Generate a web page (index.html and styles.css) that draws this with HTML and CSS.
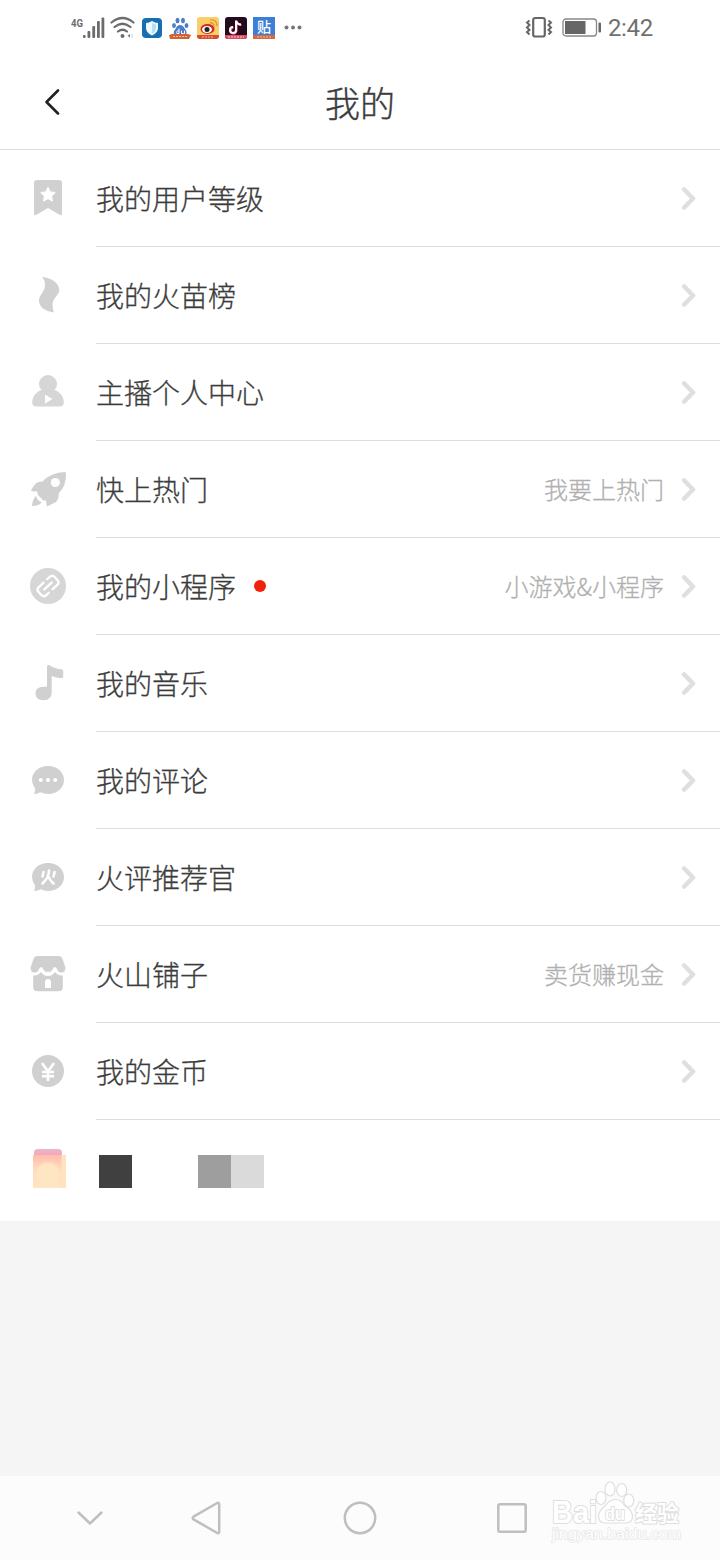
FILE: index.html
```html
<!DOCTYPE html>
<html lang="zh-CN">
<head>
<meta charset="utf-8">
<title>我的</title>
<link rel="stylesheet" href="styles.css">
</head>
<body>
<div class="screen">
  <div class="status">
    <div class="status-left">
      <svg class="signal" width="34" height="24" viewBox="0 0 34 24"><text class="net" x="0" y="10.500" textLength="12" lengthAdjust="spacingAndGlyphs">4G</text><g fill="#6c6c6c"><rect x="12" y="19" width="2.600" height="3" rx="1"/><rect x="16.500" y="15" width="2.800" height="7" rx="1"/><rect x="21.300" y="10" width="2.800" height="12" rx="1"/><rect x="26" y="5" width="2.800" height="17" rx="1"/><rect x="30.500" y="1.500" width="2.800" height="20.500" rx="1"/></g></svg>
      <svg class="wifi" width="25" height="24" viewBox="0 0 25 24" fill="none" stroke="#6c6c6c" stroke-width="2.200" stroke-linecap="round"><path d="M1.500 6.500Q12.500-2.500 23.500 6.500M4.500 11Q12.500 4.500 20.500 11M8 15.500Q12.500 12 17 15.500"/><circle cx="12.500" cy="20" r="2" fill="#6c6c6c" stroke="none"/><path d="M20 18v3.500l-2.500-1.700z" fill="#777" stroke="none"/><path d="M22 18.500v3" stroke="#ccc" stroke-width="1"/></svg>
      <svg class="app" width="22" height="22" viewBox="0 0 22 22"><rect x="1" y="1" width="20" height="20" rx="4" fill="#176fb0"/><path d="M11 4q3 2 6 2v5q0 5-6 7.500Q5 16 5 11V6q3 0 6-2z" fill="#eefcff"/><path d="M11 6v11q4-2 4-6V7.500z" fill="#b8e0f2"/></svg>
      <svg class="app" width="22" height="22" viewBox="0 0 22 22"><g fill="#4f7cc8"><ellipse cx="8.500" cy="3.500" rx="2" ry="2.700"/><ellipse cx="14" cy="3.500" rx="2" ry="2.700"/><ellipse cx="5" cy="8.500" rx="1.900" ry="2.500"/><ellipse cx="17.500" cy="8.500" rx="1.900" ry="2.500"/><path d="M11 8q3 0 5 4 2.500 3 1 6H5.500q-2-3 1-6 1.500-4 4.500-4z"/></g><path d="M10 11.500v5h-2q-1.500-2.500 2-2.800m2.500 0v3h3v-3" fill="none" stroke="#fff"/><path d="M0 18l3-1h16l3 1-2 4H1z" fill="#d2622f"/><path d="M4 19.500h14" stroke="#f6c29e" stroke-dasharray="2 1"/></svg>
      <svg class="app" width="22" height="22" viewBox="0 0 22 22"><rect width="22" height="22" rx="3" fill="#f8cf69"/><ellipse cx="10.500" cy="12" rx="7" ry="5" fill="#d52a20"/><ellipse cx="10" cy="12.500" rx="5" ry="3.500" fill="#fff"/><circle cx="10" cy="12.500" r="2.500" fill="#222"/><path d="M13 6q4-1 4 4M13 3q7-1 7 6" fill="none" stroke="#e79a32" stroke-width="1.500"/><path d="M0 18h22v1q0 3-3 3H3q-3 0-3-3z" fill="#d94b32"/><path d="M5 20h12" stroke="#f5b39a" stroke-dasharray="2 1"/></svg>
      <svg class="app" width="22" height="22" viewBox="0 0 22 22"><rect width="22" height="22" rx="3" fill="#210b1c"/><path d="M11.500 4v9.500a3 3 0 1 1-3-3M11.500 4q1 4 5 4" fill="none" stroke="#e44a6a" stroke-width="2.400"/><path d="M11 3.500V13a3 3 0 1 1-3-3M11 3.500q1 4 5 4" fill="none" stroke="#fff" stroke-width="2"/><path d="M0 18h22v1q0 3-3 3H3q-3 0-3-3z" fill="#dc4b62"/><path d="M3 20h16" stroke="#fbd0d5" stroke-dasharray="2 1"/></svg>
      <svg class="app tile" width="22" height="22" viewBox="0 0 22 22"><rect width="22" height="22" fill="#3b7fd6"/><path d="M0 18h22v4H0z" fill="#d8683f"/><path d="M4 20h14" stroke="#f1c2a8" stroke-dasharray="2 1"/><text class="tie" x="4" y="15">贴</text></svg>
      <svg class="more" width="18" height="6" viewBox="0 0 18 6" fill="#777"><circle cx="2.500" cy="2.500" r="2"/><circle cx="9" cy="2.500" r="2"/><circle cx="15.500" cy="2.500" r="2"/></svg>
    </div>
    <div class="status-right">
      <svg width="28" height="24" viewBox="0 0 28 24" fill="none" stroke="#666"><rect x="8.200" y="2" width="11.600" height="18.500" rx="2" stroke-width="2.200"/><path d="M4.500 4.500l-2.500 2 2.500 2.500L2 11.500 4.500 14 2 16l2.500 2.500M23.500 4.500l2.500 2-2.500 2.500 2.500 2.500-2.500 2.500 2.500 2-2.500 2.500" stroke-width="2"/></svg>
      <svg width="40" height="20" viewBox="0 0 40 20"><rect x="1" y="1" width="33.500" height="17" rx="3" fill="none" stroke="#888" stroke-width="1.300"/><rect x="3" y="3" width="20.500" height="13" fill="#666"/><rect x="36.500" y="4.500" width="2.500" height="10" rx="1" fill="#666"/></svg>
      <span class="time">2:42</span>
    </div>
  </div>

  <header class="header">
    <svg class="back" width="20" height="32" viewBox="0 0 20 32"><path d="M16 4.500L4.500 16 16 27.500" fill="none" stroke="#222" stroke-width="2.600" stroke-linecap="round" stroke-linejoin="round"/></svg>
    <h1 class="title">我的</h1>
  </header>

  <main class="list">
    <div class="row">
      <svg class="icon" viewBox="0 0 40 40"><path d="M9 2h22q3 0 3 3v30.500q0 2.500-2.300 1.200L20 30 8.300 36.700Q6 38 6 35.500V5q0-3 3-3z"/><path class="w" d="M20 9.200l2.200 4.700 5.100.6-3.700 3.600.9 5.100-4.500-2.500-4.500 2.500.9-5.100-3.700-3.600 5.100-.6z" stroke="#fff" stroke-linejoin="round"/></svg>
      <div class="cell"><span class="label">我的用户等级</span><svg class="arrow" viewBox="0 0 16 26"><path d="M4.200 4.500L13 13.500 4.200 22.500"/></svg></div>
    </div>
    <div class="row">
      <svg class="icon" viewBox="0 0 40 40"><path d="M14 2C24 3 31 8 31.300 15C31.300 20 24.500 23 24.500 30Q24.500 34 26 37.500C17 36 11 32 11 25.500C11 20 17 17 17 10Q17 5 14 2z"/></svg>
      <div class="cell"><span class="label">我的火苗榜</span><svg class="arrow" viewBox="0 0 16 26"><path d="M4.200 4.500L13 13.500 4.200 22.500"/></svg></div>
    </div>
    <div class="row">
      <svg class="icon soft" viewBox="0 0 40 40"><circle cx="20" cy="12" r="9"/><path d="M14 18h12c5 1 9.500 6 9.800 12q0 4.500-4.300 4.500h-23q-4.300 0-4.300-4.500C4.500 24 9 19 14 18z"/><path class="w" d="M17 22.500l7.500 4.500-7.500 4.500z"/></svg>
      <div class="cell"><span class="label">主播个人中心</span><svg class="arrow" viewBox="0 0 16 26"><path d="M4.200 4.500L13 13.500 4.200 22.500"/></svg></div>
    </div>
    <div class="row">
      <svg class="icon" viewBox="0 0 40 40"><path d="M36.500 3Q38 3 38 4.500Q38.500 16.500 30.700 24.500Q31 30 28 33L20 37Q18.500 37.500 18.500 36L18 31.500Q14 32 13.500 29.500L11 27Q9 26 9.500 22.500L4 22.300Q2.500 22 3.500 20.500Q8 11.500 14.500 12.500Q23 3.500 36.500 3z"/><circle class="w" cx="27.300" cy="13.500" r="4.600"/><path d="M8 26.500q1 5.500 6 7-4 3.500-10 3.500 0-5 4-10.500z"/></svg>
      <div class="cell"><span class="label">快上热门</span><span class="note">我要上热门</span><svg class="arrow" viewBox="0 0 16 26"><path d="M4.200 4.500L13 13.500 4.200 22.500"/></svg></div>
    </div>
    <div class="row">
      <svg class="icon soft" viewBox="0 0 40 40"><circle cx="20" cy="20" r="18"/><g transform="rotate(-43 20 20)" fill="none" stroke="#fff" stroke-width="2.300" stroke-linecap="round"><path d="M15 20h10M19 14.500h-6.500q-3.500 0-3.500 3.500v4q0 3.500 3.500 3.500H16M21 25.500h6.500q3.500 0 3.500-3.500v-4q0-3.500-3.500-3.500H24"/></g></svg>
      <div class="cell"><span class="label">我的小程序</span><i class="dot"></i><span class="note">小游戏&amp;小程序</span><svg class="arrow" viewBox="0 0 16 26"><path d="M4.200 4.500L13 13.500 4.200 22.500"/></svg></div>
    </div>
    <div class="row">
      <svg class="icon" viewBox="0 0 40 40"><path d="M19 4q0-2.500 2.500-1.700Q27 6 33.500 6.300q1.700.2 1.700 2v5.200q0 2-2 1.800-5-.3-9.500-2.300V29q0 8.300-8.500 8.300-7.700-.3-7.700-6.500 0-7 8-7H19z"/></svg>
      <div class="cell"><span class="label">我的音乐</span><svg class="arrow" viewBox="0 0 16 26"><path d="M4.200 4.500L13 13.500 4.200 22.500"/></svg></div>
    </div>
    <div class="row">
      <svg class="icon" viewBox="0 0 40 40"><path d="M20 6c9 0 16 6 16 14s-7 14-16 14q-4 0-7.500-1.700Q9 34.300 6 34q1.700-2.500 1-5.500Q4 24.500 4 20C4 12 11 6 20 6z"/><g class="w"><circle cx="12.800" cy="20" r="2"/><circle cx="20" cy="20" r="2"/><circle cx="27.200" cy="20" r="2"/></g></svg>
      <div class="cell"><span class="label">我的评论</span><svg class="arrow" viewBox="0 0 16 26"><path d="M4.200 4.500L13 13.500 4.200 22.500"/></svg></div>
    </div>
    <div class="row">
      <svg class="icon" viewBox="0 0 40 40"><path d="M20 6c9 0 16 6 16 14s-7 14-16 14q-4 0-7.500-1.700Q9 34.300 6 34q1.700-2.500 1-5.500Q4 24.500 4 20C4 12 11 6 20 6z"/><path d="M21 13.500q0 7-6.500 13M20.500 20q2 4 5 6.500M15.500 15l-1 4.500M26.500 15l-1 4.500" fill="none" stroke="#fff" stroke-width="2.600" stroke-linecap="round"/></svg>
      <div class="cell"><span class="label">火评推荐官</span><svg class="arrow" viewBox="0 0 16 26"><path d="M4.200 4.500L13 13.500 4.200 22.500"/></svg></div>
    </div>
    <div class="row">
      <svg class="icon" viewBox="0 0 40 40"><path d="M9 2h22q2.500 0 3.300 2.500l3 8.500q.7 5.500-4 5.500-3.300 0-4-3-1-2.500-2.500-2.500T24.500 15.500q-1 2.500-4.500 2.500t-4.500-2.500Q14.500 13 13.200 13t-2.500 2.500q-.7 3-4 3-4.700 0-4-5.500l3-8.500Q6.500 2 9 2z"/><path d="M5.200 21.500q4.800.5 7.800-3.500 2.500 4 7 4t7-4q3 4 7.800 3.500V33q0 4.200-4.200 4.200H9.400q-4.200 0-4.200-4.200z"/><path class="w" d="M17 34v-6q0-3 3-3t3 3v6z"/></svg>
      <div class="cell"><span class="label">火山铺子</span><span class="note">卖货赚现金</span><svg class="arrow" viewBox="0 0 16 26"><path d="M4.200 4.500L13 13.500 4.200 22.500"/></svg></div>
    </div>
    <div class="row">
      <svg class="icon" viewBox="0 0 40 40"><circle cx="20" cy="20" r="16"/><path d="M14 12l6 8.500 6-8.500M20 20v10M14 21h12M14 25.300h12" fill="none" stroke="#fff" stroke-width="2.600"/></svg>
      <div class="cell"><span class="label">我的金币</span><svg class="arrow" viewBox="0 0 16 26"><path d="M4.200 4.500L13 13.500 4.200 22.500"/></svg></div>
    </div>
    <div class="masked">
      <div class="packet"><div class="packet-top"></div><div class="packet-body"></div></div>
      <div class="block dark"></div>
      <div class="block mid"></div>
      <div class="block light"></div>
    </div>
  </main>

  <div class="filler"></div>

  <nav class="nav">
    <svg class="n-down" viewBox="0 0 40 40"><path d="M8.500 14.500L20 25.500l11.500-11"/></svg>
    <svg class="n-back" viewBox="0 0 40 40"><path d="M7.500 18.700L31.200 5q2-.8 2 1.300v27.400q0 2.100-2 1.300L7.500 21.300q-1.500-1.300 0-2.600z"/></svg>
    <svg class="n-home" viewBox="0 0 40 40"><circle cx="20" cy="20" r="15.200"/></svg>
    <svg class="n-recent" viewBox="0 0 40 40"><rect x="6.300" y="6.300" width="27.400" height="27.400" rx="1.500"/></svg>
    <svg class="mark" width="134" height="66" viewBox="0 0 134 66">
      <g class="mark-line">
        <text class="m-bai" x="1" y="41.500" textLength="45" lengthAdjust="spacingAndGlyphs">Bai</text>
        <ellipse cx="50" cy="17" rx="5" ry="6.500"/><ellipse cx="59" cy="8" rx="5" ry="7"/><ellipse cx="70.700" cy="9" rx="5" ry="6.500"/><ellipse cx="77.700" cy="19.500" rx="5" ry="6.500"/>
        <path d="M64.500 18.500q6 0 9 6 8 5 8 10.500 0 7-7 7H54.500q-7 0-7-7 0-5 8-11.500 3-5 9-5z"/>
        <text class="m-du" x="54" y="38.500" textLength="20" lengthAdjust="spacingAndGlyphs">du</text>
        <text class="m-cn" x="84" y="39.500">经验</text>
        <text class="m-url" x="1" y="58" textLength="129" lengthAdjust="spacingAndGlyphs">jingyan.baidu.com</text>
      </g>
    </svg>
  </nav>
</div>
</body>
</html>
```
FILE: styles.css
```css
* { box-sizing: border-box; }
body {
  margin: 0;
  background: #fff;
  font-family: "Noto Sans CJK SC", "Noto Sans", sans-serif;
  color: #3c3c3c;
}
svg { display: block; flex: none; }
.screen { width: 720px; height: 1560px; display: flex; flex-direction: column; }

.status {
  height: 55px;
  padding: 0 67px 0 71px;
  display: flex;
  justify-content: space-between;
  align-items: center;
}
.status-left, .status-right { display: flex; align-items: center; }
.wifi { margin-left: 5px; }
.app { margin-left: 6px; }
.tile { overflow: visible; }
.more { margin-left: 9px; }
.net { font: 700 11.5px Roboto, sans-serif; fill: #6c6c6c; }
.tie { font: 500 14px "Noto Sans CJK SC", sans-serif; fill: #fff; }
.status-right svg:nth-child(2) { margin-left: 9px; }
.time { margin-left: 6px; font: 400 24px/28px Roboto, sans-serif; letter-spacing: -0.3px; color: #707070; }

.header {
  height: 95px;
  padding: 0 42px;
  display: grid;
  grid-template-columns: 20px 1fr 20px;
  align-items: center;
  border-bottom: 1px solid #dedede;
}
.title {
  margin: 0;
  text-align: center;
  font-size: 35px;
  font-weight: 300;
  line-height: 50px;
  -webkit-text-stroke: 0.4px #3c3c3c;
}

.row { display: flex; height: 97px; padding-left: 28px; }
.icon { width: 40px; height: 40px; margin: 28px 28px 0 0; fill: #d0d0d0; }
.soft { fill: #d6d6d6; }
.icon .w { fill: #fff; }
.cell {
  flex: 1;
  display: flex;
  align-items: center;
  padding-right: 24px;
  border-bottom: 1px solid #dedede;
}
.label { font-size: 28px; font-weight: 300; line-height: 40px; -webkit-text-stroke: 0.3px #3c3c3c; }
.dot { width: 12px; height: 12px; margin-left: 18px; border-radius: 50%; background: #f02209; }
.note {
  margin-left: auto;
  font-size: 24px;
  font-weight: 300;
  line-height: 36px;
  color: #b0b0b0;
  -webkit-text-stroke: 0.3px #b0b0b0;
}
.arrow {
  width: 16px;
  height: 26px;
  margin-left: auto;
  fill: none;
  stroke: #dfdfdf;
  stroke-width: 4.600;
  stroke-linecap: round;
  stroke-linejoin: round;
}
.note + .arrow { margin-left: 16px; }

.masked { height: 101px; padding: 29px 0 0 33px; display: flex; align-items: flex-start; }
.packet { width: 33px; }
.packet-top { width: 28px; height: 6px; margin-left: 1px; border-radius: 4px 4px 0 0; background: linear-gradient(#edb3cf, #f5a8ba); }
.packet-body {
  height: 33px;
  background:
    radial-gradient(circle at 15px 19px, #ffe6c2 0 10px, transparent 13px),
    linear-gradient(90deg, transparent 28px, #ffe3bd 29px),
    linear-gradient(#ffbcae, #ffdcbd 45%, #ffe6c4);
}
.block { width: 33px; height: 33px; margin-top: 6px; }
.dark { margin-left: 33px; background: #404040; }
.mid { margin-left: 66px; background: #9e9e9e; }
.light { background: #dadada; }

.filler { flex: 1; background: #f5f5f5; }

.nav {
  position: relative;
  height: 84px;
  padding-left: 70px;
  display: flex;
  align-items: center;
  background: #fcfcfc;
  fill: none;
  stroke: #bfbfbf;
  stroke-width: 2.500;
  stroke-linecap: round;
  stroke-linejoin: round;
}
.n-down, .n-back, .n-home, .n-recent { width: 40px; height: 40px; }
.n-back { margin-left: 76px; }
.n-home { margin-left: 114px; }
.n-recent { margin-left: 112px; }
.mark { position: absolute; left: 551px; top: 5px; }
.mark-line { fill: #fff; stroke: #dedede; stroke-width: 1.200; }
.mark-line text { paint-order: stroke; stroke-width: 2; }
.m-bai { font: 700 31px "Liberation Sans", sans-serif; }
.m-du { font: 700 19px "Liberation Sans", sans-serif; }
.m-cn { font: 700 22px "Noto Sans CJK SC", sans-serif; }
.mark-line .m-url { font: 400 14px "Liberation Sans", sans-serif; stroke: #e8e8e8; stroke-width: 1.500; }
```
